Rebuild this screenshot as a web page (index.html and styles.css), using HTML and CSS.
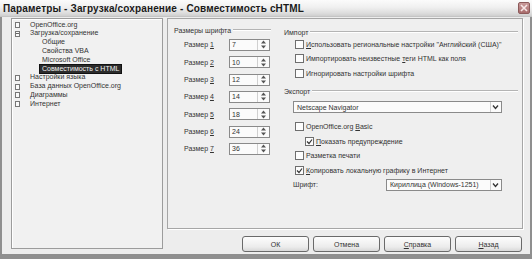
FILE: index.html
```html
<!DOCTYPE html>
<html>
<head>
<meta charset="utf-8">
<link rel="stylesheet" href="styles.css">
</head>
<body>
<div class="window">
  <div class="titlebar">
    <span class="title">Параметры - Загрузка/сохранение - Совместимость cHTML</span>
    <span class="close"><svg width="8" height="8" viewBox="0 0 8 8"><path d="M1 1L7 7M7 1L1 7" stroke="#f6e6e6" stroke-width="1.6"/></svg></span>
  </div>
  <div class="frame">
    <div class="tree">
      <div class="node"><span class="exp"></span><span class="lbl">OpenOffice.org</span></div>
      <div class="node"><span class="exp open"></span><span class="lbl">Загрузка/сохранение</span></div>
      <div class="child"><span class="lbl">Общие</span></div>
      <div class="child"><span class="lbl">Свойства VBA</span></div>
      <div class="child"><span class="lbl">Microsoft Office</span></div>
      <div class="child"><span class="lbl sel">Совместимость с HTML</span></div>
      <div class="node"><span class="exp"></span><span class="lbl">Настройки языка</span></div>
      <div class="node"><span class="exp"></span><span class="lbl">База данных OpenOffice.org</span></div>
      <div class="node"><span class="exp"></span><span class="lbl">Диаграммы</span></div>
      <div class="node"><span class="exp"></span><span class="lbl">Интернет</span></div>
    </div>
    <div class="main">
      <div class="panel">
        <div class="fonts">
          <div class="ghead"><span>Размеры шрифта</span><span class="gline"></span></div>
          <div class="srow"><span class="slbl">Размер <u>1</u></span><span class="spin"><span class="sval">7</span><span class="sbtn"><svg width="7" height="9" viewBox="0 0 7 9"><path d="M3.5 0.5L6 3.5H1Z M3.5 8.5L6 5.5H1Z" fill="#555"/></svg></span></span></div>
          <div class="srow"><span class="slbl">Размер <u>2</u></span><span class="spin"><span class="sval">10</span><span class="sbtn"><svg width="7" height="9" viewBox="0 0 7 9"><path d="M3.5 0.5L6 3.5H1Z M3.5 8.5L6 5.5H1Z" fill="#555"/></svg></span></span></div>
          <div class="srow"><span class="slbl">Размер <u>3</u></span><span class="spin"><span class="sval">12</span><span class="sbtn"><svg width="7" height="9" viewBox="0 0 7 9"><path d="M3.5 0.5L6 3.5H1Z M3.5 8.5L6 5.5H1Z" fill="#555"/></svg></span></span></div>
          <div class="srow"><span class="slbl">Размер <u>4</u></span><span class="spin"><span class="sval">14</span><span class="sbtn"><svg width="7" height="9" viewBox="0 0 7 9"><path d="M3.5 0.5L6 3.5H1Z M3.5 8.5L6 5.5H1Z" fill="#555"/></svg></span></span></div>
          <div class="srow"><span class="slbl">Размер <u>5</u></span><span class="spin"><span class="sval">18</span><span class="sbtn"><svg width="7" height="9" viewBox="0 0 7 9"><path d="M3.5 0.5L6 3.5H1Z M3.5 8.5L6 5.5H1Z" fill="#555"/></svg></span></span></div>
          <div class="srow"><span class="slbl">Размер <u>6</u></span><span class="spin"><span class="sval">24</span><span class="sbtn"><svg width="7" height="9" viewBox="0 0 7 9"><path d="M3.5 0.5L6 3.5H1Z M3.5 8.5L6 5.5H1Z" fill="#555"/></svg></span></span></div>
          <div class="srow"><span class="slbl">Размер <u>7</u></span><span class="spin"><span class="sval">36</span><span class="sbtn"><svg width="7" height="9" viewBox="0 0 7 9"><path d="M3.5 0.5L6 3.5H1Z M3.5 8.5L6 5.5H1Z" fill="#555"/></svg></span></span></div>
        </div>
        <div class="opts">
          <div class="ghead imp"><span>Импорт</span><span class="gline"></span></div>
          <div class="cb r1"><span class="box"></span><span><u>И</u>спользовать региональные настройки "Английский (США)"</span></div>
          <div class="cb r1"><span class="box"></span><span>Импортировать неизвестные <u>т</u>еги HTML как поля</span></div>
          <div class="cb r1"><span class="box"></span><span>Игнорировать настройки шрифта</span></div>
          <div class="ghead exp-h"><span>Экспорт</span><span class="gline"></span></div>
          <div class="select wide"><span class="stext">Netscape Navigator</span><span class="dbtn"><svg width="7" height="6" viewBox="0 0 7 6"><path d="M1 1.5L3.5 4.5L6 1.5" fill="none" stroke="#333" stroke-width="1.3"/></svg></span></div>
          <div class="exgroup">
            <div class="cb r2"><span class="box"></span><span>OpenOffice.org <u>B</u>asic</span></div>
            <div class="cb r2 sub"><span class="box"><svg width="7" height="7" viewBox="0 0 7 7"><path d="M1 3.5L3 5.5L6 1.5" fill="none" stroke="#333" stroke-width="1.2"/></svg></span><span><u>П</u>оказать предупреждение</span></div>
            <div class="cb r2"><span class="box"></span><span>Разметка печати</span></div>
            <div class="cb r2"><span class="box"><svg width="7" height="7" viewBox="0 0 7 7"><path d="M1 3.5L3 5.5L6 1.5" fill="none" stroke="#333" stroke-width="1.2"/></svg></span><span><u>К</u>опировать локальную графику в Интернет</span></div>
          </div>
          <div class="fontrow"><span class="flbl">Шрифт:</span><div class="select narrow"><span class="stext">Кириллица (Windows-1251)</span><span class="dbtn"><svg width="7" height="6" viewBox="0 0 7 6"><path d="M1 1.5L3.5 4.5L6 1.5" fill="none" stroke="#333" stroke-width="1.3"/></svg></span></div></div>
        </div>
      </div>
      <div class="buttons">
        <span class="btn">ОК</span>
        <span class="btn">Отмена</span>
        <span class="btn"><u>С</u>правка</span>
        <span class="btn"><u>Н</u>азад</span>
      </div>
    </div>
  </div>
</div>
</body>
</html>
```
FILE: styles.css
```css
* { box-sizing: border-box; }
html, body { margin: 0; padding: 0; }
body {
  width: 532px;
  height: 259px;
  overflow: hidden;
  font-family: "Liberation Sans", Arial, sans-serif;
  font-size: 7px;
  color: #333;
  background: #ededed;
}
u { text-underline-offset: 1px; }
.window {
  width: 532px;
  height: 259px;
  display: flex;
  flex-direction: column;
}
.titlebar {
  height: 17px;
  flex: none;
  display: flex;
  align-items: center;
  justify-content: space-between;
  padding: 0 2px 0 3px;
  background: linear-gradient(#fbfbfb 0%, #f0f0f0 45%, #dedede 80%, #cfcfcf 100%);
  border-bottom: 1px solid #c4c4c4;
}
.title {
  font-size: 10px;
  font-weight: bold;
  color: #1a1a1a;
  letter-spacing: 0.15px;
}
.close {
  width: 12px;
  height: 12px;
  border-radius: 2px;
  background: linear-gradient(#c99a9a, #a96c6c);
  border: 1px solid #8c5a5a;
  display: flex;
  align-items: center;
  justify-content: center;
}
.frame {
  flex: 1;
  display: flex;
  padding: 1px 7px 0 9px;
  border: solid #8f8f8f;
  border-width: 0 2px 5px 2px;
  background: #ededed;
}
.tree {
  width: 152px;
  height: 231px;
  flex: none;
  border: 1px solid #9c9c9c;
  box-shadow: inset 1px 1px 0 #fff;
  background: #f1f1f1;
  padding: 1.6px 0 0 3px;
  line-height: 8.8px;
}
.node, .child {
  height: 8.8px;
  display: flex;
  align-items: center;
  white-space: nowrap;
}
.exp {
  width: 5px;
  height: 6px;
  border: 1px solid #777;
  margin-right: 10px;
  background: #fafafa;
}
.exp.open {
  background: linear-gradient(#666, #666) center / 3px 1px no-repeat, #fafafa;
}
.child { padding-left: 25px; }
.child .lbl { padding: 0 2px; }
.lbl.sel {
  background: #2c2c2c;
  color: #f2f2f2;
  outline: 1px solid #111;
}
.main {
  width: 356px;
  margin-left: 4px;
  display: flex;
  flex-direction: column;
}
.panel {
  height: 211px;
  border: 1px solid #a6a6a6;
  box-shadow: 1px 1px 0 #fff;
  background: #efefef;
  display: flex;
}
.fonts {
  width: 108px;
  padding: 6px 5px 0 6px;
}
.ghead {
  height: 10px;
  display: flex;
  align-items: center;
  white-space: nowrap;
}
.gline {
  flex: 1;
  height: 2px;
  margin-left: 2px;
  border-top: 1px solid #b4b4b4;
  border-bottom: 1px solid #fff;
}
.fonts .ghead { margin-bottom: 1.33px; }
.srow {
  height: 17.33px;
  display: flex;
  align-items: center;
  padding-left: 10px;
}
.slbl { width: 45px; }
.spin {
  width: 41px;
  height: 12px;
  border: 1px solid #8a8a8a;
  background: #fbfbfb;
  display: flex;
  align-items: center;
}
.sval { flex: 1; padding-left: 2px; }
.sbtn {
  width: 12px;
  height: 10px;
  display: flex;
  align-items: center;
  justify-content: center;
  border-left: 1px solid #d0d0d0;
}
.opts {
  width: 234px;
  margin-left: 8px;
  padding-top: 8px;
}
.cb {
  display: flex;
  align-items: center;
  padding-left: 11px;
  white-space: nowrap;
}
.cb.r1 { height: 14.5px; }
.cb.r2 { height: 14.7px; }
.cb.sub { padding-left: 21px; }
.box {
  width: 9px;
  height: 9px;
  flex: none;
  border: 1px solid #6e6e6e;
  background: #fdfdfd;
  margin-right: 2px;
  display: flex;
  align-items: center;
  justify-content: center;
}
.exp-h { margin-top: 5.5px; }
.select {
  height: 12px;
  border: 1px solid #8a8a8a;
  background: #fbfbfb;
  display: flex;
  align-items: center;
}
.select.wide {
  margin: 5px 0 0 9px;
  width: 209px;
}
.stext { flex: 1; padding-left: 3px; white-space: nowrap; }
.dbtn {
  width: 10px;
  height: 10px;
  margin-right: 1px;
  display: flex;
  align-items: center;
  justify-content: center;
  border-left: 1px solid #d0d0d0;
}
.exgroup { margin-top: 6px; }
.fontrow {
  margin-top: 1px;
  display: flex;
  align-items: center;
  padding-left: 9px;
}
.flbl { width: 93px; }
.select.narrow { width: 116px; }
.buttons {
  margin-top: 7px;
  height: 16px;
  display: flex;
  justify-content: flex-end;
  gap: 4px;
  padding-right: 1px;
}
.btn {
  width: 67px;
  height: 16px;
  border: 1px solid #6a6a6a;
  border-radius: 3px;
  background: linear-gradient(#fdfdfd, #ececec 70%, #d8d8d8);
  display: flex;
  align-items: center;
  justify-content: center;
}
```
